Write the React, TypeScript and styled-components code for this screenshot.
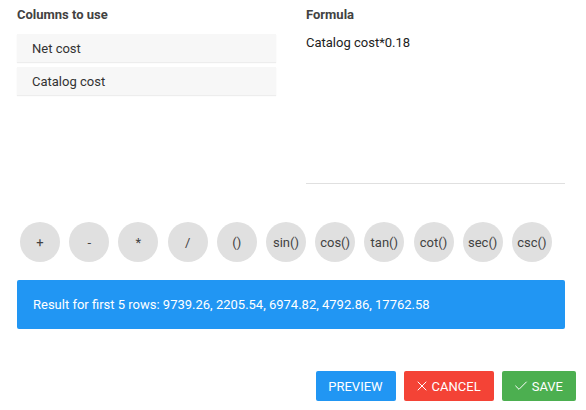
import React from "react";
import styled, { createGlobalStyle } from "styled-components";
import { X, Check } from "lucide-react";

const Global = createGlobalStyle`
  html, body { margin: 0; padding: 0; background: #fff; }
  body { font-family: Roboto, "Noto Sans", Arial, sans-serif; color: #333; }
  * { box-sizing: border-box; }
`;

const Page = styled.div`
  width: 586px;
  height: 410px;
  padding: 7px 21px 0 17px;
  display: flex;
  flex-direction: column;
`;

const Columns = styled.div`
  display: grid;
  grid-template-columns: 259px 259px;
  column-gap: 30px;
`;

const Column = styled.div`
  display: flex;
  flex-direction: column;
`;

const Title = styled.div`
  font-size: 13px;
  font-weight: 700;
  line-height: 16px;
  height: 16px;
  color: #424242;
`;

const List = styled.div`
  margin-top: 11px;
  display: flex;
  flex-direction: column;
  gap: 5px;
`;

const Item = styled.div`
  height: 28px;
  padding-left: 15px;
  display: flex;
  align-items: center;
  font-size: 13px;
  color: #333;
  background: #f7f7f7;
  box-shadow: 0 1px 1px rgba(0, 0, 0, 0.07);
`;

const FormulaField = styled.div`
  height: 161px;
  padding-top: 12px;
  font-size: 13px;
  line-height: 16px;
  color: #222;
  border-bottom: 1px solid #e0e0e0;
`;

const Operators = styled.div`
  margin-top: 38px;
  padding-left: 3px;
  display: flex;
  gap: 9.2px;
`;

const OpButton = styled.button`
  width: 40px;
  height: 40px;
  border-radius: 50%;
  border: none;
  padding: 0;
  background: #e0e0e0;
  color: #424242;
  font-family: Roboto, "Noto Sans", Arial, sans-serif;
  font-size: 13px;
  display: flex;
  align-items: center;
  justify-content: center;
`;

const ResultBar = styled.div`
  margin-top: 18px;
  height: 49px;
  padding-left: 16px;
  display: flex;
  align-items: center;
  background: #2196f3;
  color: #fff;
  font-size: 13px;
  border-radius: 2px;
`;

const Actions = styled.div`
  margin-top: 42px;
  margin-right: -11px;
  display: flex;
  justify-content: flex-end;
  gap: 8px;
`;

const ActionButton = styled.button<{ $bg: string; $padLeft?: number; $gap?: number }>`
  height: 30px;
  padding: 0 13px 0 ${(p) => p.$padLeft ?? 13}px;
  border: none;
  border-radius: 2px;
  background: ${(p) => p.$bg};
  color: #fff;
  font-family: Roboto, "Noto Sans", Arial, sans-serif;
  font-size: 13px;
  text-transform: uppercase;
  display: flex;
  align-items: center;
  gap: ${(p) => p.$gap ?? 0}px;
`;

const ops = ["+", "-", "*", "/", "()", "sin()", "cos()", "tan()", "cot()", "sec()", "csc()"];

export default function App() {
  return (
    <>
      <Global />
      <Page>
        <Columns>
          <Column>
            <Title>Columns to use</Title>
            <List>
              <Item>Net cost</Item>
              <Item>Catalog cost</Item>
            </List>
          </Column>
          <Column>
            <Title>Formula</Title>
            <FormulaField>Catalog cost*0.18</FormulaField>
          </Column>
        </Columns>
        <Operators>
          {ops.map((o) => (
            <OpButton key={o}>{o}</OpButton>
          ))}
        </Operators>
        <ResultBar>Result for first 5 rows: 9739.26, 2205.54, 6974.82, 4792.86, 17762.58</ResultBar>
        <Actions>
          <ActionButton $bg="#2196f3" $padLeft={12}>Preview</ActionButton>
          <ActionButton $bg="#f44336" $padLeft={10} $gap={2}>
            <X size={16} strokeWidth={1.5} />
            Cancel
          </ActionButton>
          <ActionButton $bg="#4caf50" $padLeft={11} $gap={3}>
            <Check size={16} strokeWidth={1.5} />
            Save
          </ActionButton>
        </Actions>
      </Page>
    </>
  );
}
